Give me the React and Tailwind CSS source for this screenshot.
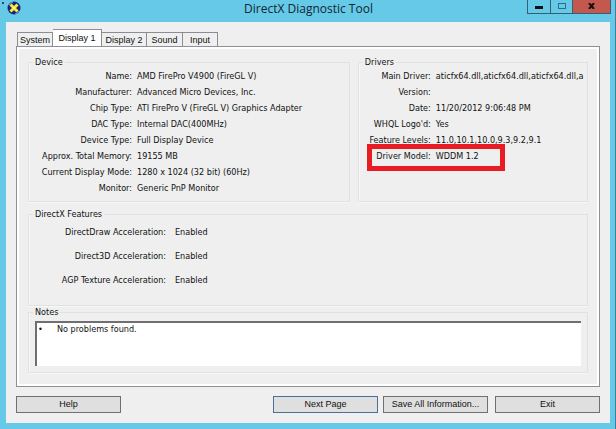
import { useState } from "react";

const TABS = [
  { name: "System", width: "w-9" },
  { name: "Display 1", width: "w-[49px]" },
  { name: "Display 2", width: "w-[45px]" },
  { name: "Sound", width: "w-9" },
  { name: "Input", width: "w-[35px]" },
];

const DEVICE = [
  ["Name", "AMD FirePro V4900 (FireGL V)"],
  ["Manufacturer", "Advanced Micro Devices, Inc."],
  ["Chip Type", "ATI FirePro V (FireGL V) Graphics Adapter"],
  ["DAC Type", "Internal DAC(400MHz)"],
  ["Device Type", "Full Display Device"],
  ["Approx. Total Memory", "19155 MB"],
  ["Current Display Mode", "1280 x 1024 (32 bit) (60Hz)"],
  ["Monitor", "Generic PnP Monitor"],
];

const DRIVERS = [
  ["Main Driver", "aticfx64.dll,aticfx64.dll,aticfx64.dll,a"],
  ["Version", ""],
  ["Date", "11/20/2012 9:06:48 PM"],
  ["WHQL Logo'd", "Yes"],
  ["Feature Levels", "11.0,10.1,10.0,9.3,9.2,9.1"],
  ["Driver Model", "WDDM 1.2"],
];

const FEATURES = [
  ["DirectDraw Acceleration", "Enabled"],
  ["Direct3D Acceleration", "Enabled"],
  ["AGP Texture Acceleration", "Enabled"],
];

const DirectXIcon = () => (
  <svg width="14" height="14" viewBox="0 0 14 14" aria-hidden="true">
    <circle cx="7" cy="7" r="6.5" fill="#17247c" />
    <path d="M2 4a6 6 0 0 1 4-3M12 10a6 6 0 0 1-4 3" stroke="#7d9bd2" fill="none" />
    <path d="M3.5 3.5l7 7M10.5 3.5l-7 7" stroke="#f7ec35" strokeWidth="3" />
    <circle cx="7" cy="7" r="1" fill="#fffbd0" />
  </svg>
);

const GroupBox = ({ title, className, children }) => (
  <fieldset className={`min-w-0 border border-[#e0e1e3] shadow-[inset_1px_0_#f8f8f8,0_1px_#f8f8f8] ${className}`}>
    <legend className="ml-1 px-0.5 leading-3">{title}</legend>
    {children}
  </fieldset>
);

const Field = ({ label, value, labelWidth, gap = "gap-[5px]", marked }) => (
  <div className={`relative flex leading-4 whitespace-nowrap ${gap}`}>
    <dt className={`shrink-0 text-right ${labelWidth}`}>{label}:</dt>
    <dd>{value}</dd>
    {marked && (
      <span className="absolute -top-1 left-2 h-[27px] w-[138px] border-[5px] border-[#e91c24]" />
    )}
  </div>
);

const DialogButton = ({ children, className = "border-[#707070]" }) => (
  <button
    type="button"
    className={`h-[17px] w-[105px] border bg-[#dfdfdf] text-center leading-[15px] ${className}`}
  >
    {children}
  </button>
);

const TitleBar = () => (
  <header className="flex h-[22px] items-start bg-[#66c9e8]">
    <span className="mt-0.5 ml-0.5 size-0.5 rounded-full bg-[#10272f]" />
    <div className="w-[86px] pt-px pl-[3px]">
      <DirectXIcon />
    </div>
    <h1 className="flex-1 text-center font-['Open_Sans','Noto_Sans',sans-serif] text-[12px] leading-[18px] text-[#10272f]">
      DirectX Diagnostic Tool
    </h1>
    <div className="mr-1 flex h-3.5 border-x border-b border-[#35616f]">
      <button type="button" aria-label="Minimize" className="flex w-[23px] justify-center border-r border-[#35616f] pt-1.5">
        <span className="h-[3px] w-2 bg-[#111]" />
      </button>
      <button type="button" aria-label="Maximize" className="flex w-[22px] justify-center border-r border-[#35616f] pt-[3px]">
        <span className="h-1.5 w-2 border border-[#2f7080]" />
      </button>
      <button type="button" aria-label="Close" className="flex w-[37px] justify-center bg-[#c4584e] pt-[3px]">
        <svg width="7" height="6" viewBox="0 0 7 6" aria-hidden="true">
          <path d="M1 0l5 6M6 0l-5 6" stroke="#111" strokeWidth="2" />
        </svg>
      </button>
    </div>
  </header>
);

export default function App() {
  const [activeTab, setActiveTab] = useState("Display 1");

  return (
    <div className="flex min-h-screen flex-col border-r border-[#3d7f96] bg-[#66c9e8] font-['DejaVu_Sans_Condensed','DejaVu_Sans',sans-serif] text-[9px] text-[#111]">
      <TitleBar />
      <main className="mr-[5px] mb-1.5 ml-1.5 flex flex-1 flex-col bg-[#efefef] px-2.5 pt-2 pb-2.5">
        <div role="tablist" className="flex h-4 items-end pl-px font-['Liberation_Sans',Arial,sans-serif]">
          {TABS.map((tab) => (
            <button
              key={tab.name}
              type="button"
              role="tab"
              aria-selected={activeTab === tab.name}
              onClick={() => setActiveTab(tab.name)}
              className={`shrink-0 whitespace-nowrap border-t border-r border-[#8b8d91] text-center first:border-l ${tab.width} ${
                activeTab === tab.name ? "h-[17px] bg-white leading-[15px]" : "h-3.5 leading-[15px]"
              }`}
            >
              {tab.name}
            </button>
          ))}
        </div>

        <section className="flex flex-1 flex-col border border-[#8e9096] p-[3px] shadow-[inset_0_0_0_2px_#fff]">
          <div className="flex flex-1 flex-col bg-[#efefef] px-2 pt-1.5 pb-2.5">
            <div className="grid grid-cols-[323fr_231fr] gap-2">
              <GroupBox title="Device" className="h-[146px]">
                <dl>
                  {DEVICE.map(([label, value]) => (
                    <Field key={label} label={label} value={value} labelWidth="w-[103px]" />
                  ))}
                </dl>
              </GroupBox>
              <GroupBox title="Drivers" className="h-[146px]">
                <dl>
                  {DRIVERS.map(([label, value]) => (
                    <Field
                      key={label}
                      label={label}
                      value={value}
                      labelWidth="w-[72px]"
                      marked={label === "Driver Model"}
                    />
                  ))}
                </dl>
              </GroupBox>
            </div>

            <GroupBox title="DirectX Features" className="mt-1.5 h-[98px]">
              <dl className="flex flex-col gap-2 pt-1">
                {FEATURES.map(([label, value]) => (
                  <Field key={label} label={label} value={value} labelWidth="w-[137px]" gap="gap-[9px]" />
                ))}
              </dl>
            </GroupBox>

            <GroupBox title="Notes" className="flex-1">
              <textarea
                aria-label="Notes"
                readOnly
                defaultValue={"•\tNo problems found."}
                className="mx-1.5 mt-[3px] block h-[45px] w-[calc(100%-12px)] resize-none border-t-2 border-l-2 border-[#6f6f6f] bg-white px-px leading-3 outline-none [tab-size:19px]"
              />
            </GroupBox>
          </div>
        </section>

        <footer className="mt-[9px] flex font-['Liberation_Sans',Arial,sans-serif]">
          <DialogButton>Help</DialogButton>
          <div className="ml-auto flex">
            <DialogButton className="border-[#4a7099]">Next Page</DialogButton>
            <div className="mr-[7px] ml-[5px] flex">
              <DialogButton>Save All Information...</DialogButton>
            </div>
            <DialogButton>Exit</DialogButton>
          </div>
        </footer>
      </main>
    </div>
  );
}
